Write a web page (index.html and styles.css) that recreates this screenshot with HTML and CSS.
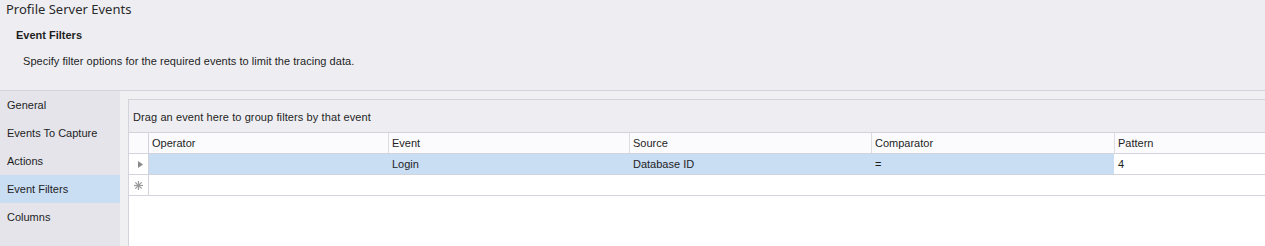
FILE: index.html
```html
<!DOCTYPE html>
<html>
  <head>
    <title>Profile Server Events</title>
    <link rel="stylesheet" href="styles.css">
  </head>
  <body>
    <div class="header">
      <div class="title">Profile Server Events</div>
      <div class="subtitle">Event Filters</div>
      <div class="description">Specify filter options for the required events to limit the tracing data.</div>
    </div>

    <div class="main">
      <div class="sidebar">
        <div class="nav-item">General</div>
        <div class="nav-item">Events To Capture</div>
        <div class="nav-item">Actions</div>
        <div class="nav-item selected">Event Filters</div>
        <div class="nav-item">Columns</div>
      </div>

      <div class="content">
        <div class="grid">
          <div class="group-panel">Drag an event here to group filters by that event</div>

          <div class="grid-row header-row">
            <div class="cell indicator"></div>
            <div class="cell">Operator</div>
            <div class="cell">Event</div>
            <div class="cell">Source</div>
            <div class="cell">Comparator</div>
            <div class="cell">Pattern</div>
          </div>

          <div class="grid-row data-row">
            <div class="cell indicator">
              <svg width="5" height="7" viewBox="0 0 5 7"><path d="M0 0 L5 3.5 L0 7 Z" fill="#8a8a8a"/></svg>
            </div>
            <div class="cell"></div>
            <div class="cell">Login</div>
            <div class="cell">Database ID</div>
            <div class="cell">=</div>
            <div class="cell focused">4</div>
          </div>

          <div class="grid-row new-row">
            <div class="cell indicator">
              <svg width="9" height="9" viewBox="0 0 9 9">
                <g stroke="#9a9a9a" stroke-width="1.2">
                  <line x1="4.5" y1="0" x2="4.5" y2="9"/>
                  <line x1="0" y1="4.5" x2="9" y2="4.5"/>
                  <line x1="1.3" y1="1.3" x2="7.7" y2="7.7"/>
                  <line x1="7.7" y1="1.3" x2="1.3" y2="7.7"/>
                </g>
              </svg>
            </div>
            <div class="cell"></div>
            <div class="cell"></div>
            <div class="cell"></div>
            <div class="cell"></div>
            <div class="cell"></div>
          </div>
        </div>
      </div>
    </div>
  </body>
</html>
```

FILE: styles.css
```css
body {
  font-family: "Liberation Sans", Arial, sans-serif;
  font-size: 11px;
  color: #1e1e1e;
  margin: 0;
  background-color: #eeeef2;
  overflow: hidden;
}
.header {
  height: 91px;
  border-bottom: 1px solid #d3d3db;
  box-sizing: border-box;
}
.title {
  font-family: "Noto Sans", sans-serif;
  font-size: 13px;
  color: #2a2a2a;
  padding: 0 0 0 6px;
  line-height: 19px;
}
.subtitle {
  font-weight: bold;
  padding-left: 16px;
  margin-top: 9px;
  line-height: 15px;
}
.description {
  padding-left: 23px;
  margin-top: 11px;
  line-height: 15px;
  letter-spacing: 0.04px;
}
.main {
  display: flex;
  height: 155px;
}
.sidebar {
  width: 120px;
  background-color: #e4e4ea;
  padding-top: 0;
}
.nav-item {
  height: 28px;
  line-height: 28px;
  padding-left: 7px;
}
.nav-item.selected {
  background-color: #c9ddf3;
}
.content {
  flex: 1;
  padding: 8px 0 0 8px;
  background-color: #f0f0f3;
}
.grid {
  height: 100%;
  background-color: #fff;
  border-left: 1px solid #d3d3db;
  border-top: 1px solid #d3d3db;
}
.group-panel {
  height: 32px;
  line-height: 34px;
  padding-left: 4px;
  letter-spacing: 0.1px;
  background-color: #eeeef2;
  border-bottom: 1px solid #d3d3db;
}
.grid-row {
  display: grid;
  grid-template-columns: 19px 240px 241px 242px 243px 1fr;
  height: 21px;
  border-bottom: 1px solid #d3d3db;
  box-sizing: border-box;
}
.cell {
  padding-left: 3px;
  line-height: 20px;
  white-space: nowrap;
  overflow: hidden;
  border-left: 1px solid #d3d3db;
}
.cell.indicator {
  border-left: none;
  padding-left: 0;
  display: flex;
  align-items: center;
  justify-content: center;
}
.header-row {
  background-color: #fbfbfd;
}
.header-row .cell:nth-child(n+3) {
  border-left-color: #dcdce3;
}
.data-row .cell {
  background-color: #c9ddf3;
  border-left: none;
  padding-left: 4px;
}
.data-row .cell:nth-child(2) {
  border-left: 1px solid #d3d3db;
}
.data-row .cell.indicator {
  background-color: #fff;
}
.data-row .cell.focused {
  background-color: #fff;
}
.new-row .cell:nth-child(n+3) {
  border-left: none;
}
```
